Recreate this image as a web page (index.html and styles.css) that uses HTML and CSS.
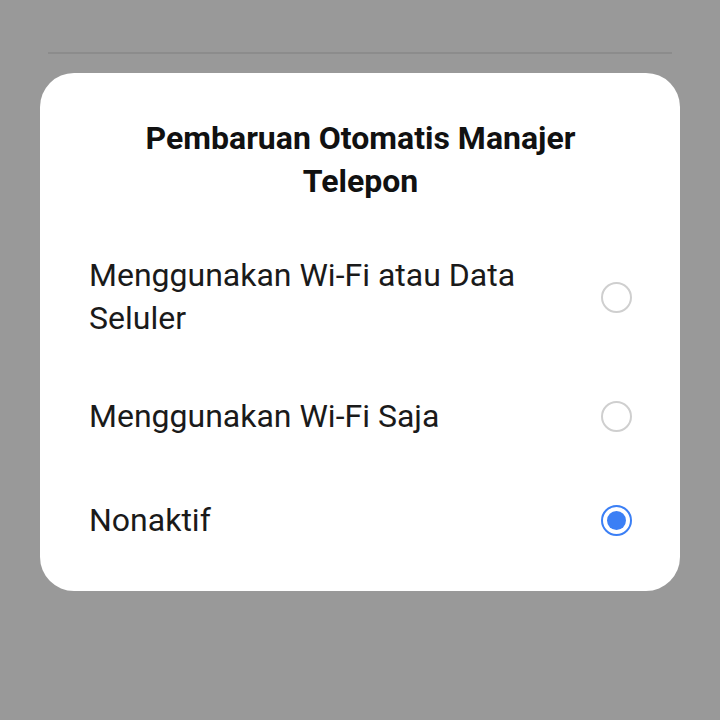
FILE: index.html
```html
<!DOCTYPE html>
<html>
<head>
    <meta charset="utf-8" />
    <title>Pembaruan Otomatis</title>
    <link rel="stylesheet" href="styles.css">
</head>
<body>
<div class="screen">
    <div class="divider"></div>
    <div class="dialog"><!-- dialog -->
        <div class="dialog-title">Pembaruan Otomatis Manajer Telepon</div>
        <ul class="option-list">
            <li class="option">
                <span class="option-text">Menggunakan Wi-Fi atau Data Seluler</span>
                <span class="radio"></span>
            </li>
            <li class="option">
                <span class="option-text">Menggunakan Wi-Fi Saja</span>
                <span class="radio"></span>
            </li>
            <li class="option">
                <span class="option-text">Nonaktif</span>
                <span class="radio radio-on"></span>
            </li>
        </ul>
    </div>
</div>
</body>
</html>
```
FILE: styles.css
```css
body,div,ul,li{margin: 0;padding: 0;}
ul,li{list-style: none;}

body{background: #999999;font-family: Roboto, "Noto Sans", sans-serif;}
.screen{width: 720px;height: 720px;padding-top: 52px;box-sizing: border-box;}
.divider{height: 2px;margin: 0 48px 0 48px;background: #8c8c8c;}
.dialog{margin: 19px 40px 0 40px;background: #fff;border-radius: 34px;padding: 44px 48px 19px 49px;}
.dialog-title{font-size: 32px;font-weight: bold;line-height: 43px;text-align: center;color: #111;padding: 0 10px;}
.option-list{margin-top: 27px;}
.option{display: flex;align-items: center;justify-content: space-between;padding: 24px 0;min-height: 56px;}
.option-text{font-size: 32px;line-height: 43px;color: #1a1a1a;max-width: 440px;}
.radio{flex: none;width: 27px;height: 27px;border: 2.5px solid #cfcfcf;border-radius: 50%;box-sizing: content-box;}
.radio-on{border-color: #3b7ff5;position: relative;}
.radio-on:after{content: "";position: absolute;left: 4px;top: 4px;width: 19px;height: 19px;border-radius: 50%;background: #3b7ff5;}
```
